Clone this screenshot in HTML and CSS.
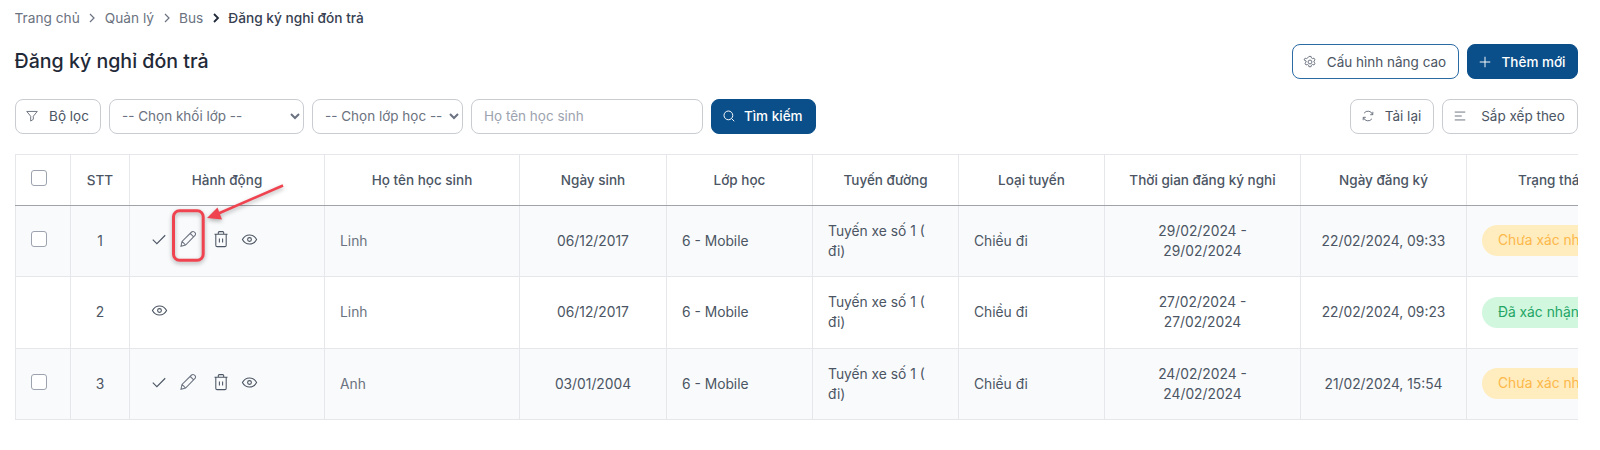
FILE: index.html
```html
<!DOCTYPE html>
<html lang="vi">
<head>
<meta charset="utf-8">
<title>Đăng ký nghỉ đón trả</title>
<link rel="stylesheet" href="styles.css">
</head>
<body>
<svg width="0" height="0" class="defs">
  <symbol id="i-check" viewBox="0 0 18 18"><path d="M2 9.800 6.600 14.200 16 4.800"/></symbol>
  <symbol id="i-pencil" viewBox="0 0 18 18"><path d="M2 16.200 3 11.400 12.600 2a1.900 1.900 0 0 1 2.700 0l.7.700a1.900 1.900 0 0 1 0 2.700L6.600 15 2 16.200ZM3 11.400 6.600 15M11.200 3.400l3.400 3.400"/></symbol>
  <symbol id="i-trash" viewBox="0 0 18 18"><path d="M2.500 4.200h13M6.300 4.200V2.600c0-.6.400-1 1-1h3.400c.6 0 1 .4 1 1v1.600M3.800 4.200v11c0 .8.600 1.400 1.400 1.400h7.600c.8 0 1.400-.6 1.400-1.400v-11M7.400 8.500v4M10.600 8.500v4"/></symbol>
  <symbol id="i-eye" viewBox="0 0 18 18"><path d="M1.500 9C3.200 5.800 5.800 4.200 9 4.200s5.800 1.600 7.500 4.800c-1.700 3.200-4.300 4.800-7.500 4.800S3.200 12.200 1.500 9Z"/><circle cx="9" cy="9" r="2"/></symbol>
</svg>

<main class="page">
  <nav class="crumbs">
    <span>Trang chủ</span>
    <svg class="chev" viewBox="0 0 10 10"><path d="M3 1l4 4-4 4"/></svg>
    <span>Quản lý</span>
    <svg class="chev" viewBox="0 0 10 10"><path d="M3 1l4 4-4 4"/></svg>
    <span>Bus</span>
    <svg class="chev chev-strong" viewBox="0 0 10 10"><path d="M3 1l4 4-4 4"/></svg>
    <span class="crumb-current">Đăng ký nghỉ đón trả</span>
  </nav>

  <header class="title-row">
    <h1 class="title">Đăng ký nghỉ đón trả</h1>
    <div class="actions">
      <button class="btn btn-outline btn-config">
        <svg class="ico ico-gear" viewBox="0 0 16 16"><circle cx="8" cy="8" r="2.200"/><path d="M6.800 1.600h2.400l.4 1.700 1.300.8 1.700-.5 1.200 2-1.300 1.200v1.400l1.300 1.200-1.200 2-1.700-.5-1.300.8-.4 1.700H6.800l-.4-1.700-1.300-.8-1.700.5-1.200-2 1.300-1.200V6.800L1.200 5.600l1.200-2 1.700.5 1.300-.8z" stroke-linejoin="round"/></svg>
        Cấu hình nâng cao
      </button>
      <button class="btn btn-primary btn-add">
        <svg class="ico" viewBox="0 0 16 16"><path d="M8 2v12M2 8h12"/></svg>
        Thêm mới
      </button>
    </div>
  </header>

  <section class="filters">
    <div class="filter-left">
      <button class="btn btn-filter">
        <svg class="ico" viewBox="0 0 16 16"><path d="M2 2.800h12L9.500 8.300v3.500l-3 2V8.300z"/></svg>
        Bộ lọc
      </button>
      <select class="field select-grade"><option>-- Chọn khối lớp --</option></select>
      <select class="field select-class"><option>-- Chọn lớp học --</option></select>
      <input class="field input-name" placeholder="Họ tên học sinh">
      <button class="btn btn-primary btn-search">
        <svg class="ico" viewBox="0 0 16 16"><circle cx="7.300" cy="7.300" r="5"/><path d="M11 11l3 3"/></svg>
        Tìm kiếm
      </button>
    </div>
    <div class="filter-right">
      <button class="btn btn-reload">
        <svg class="ico" viewBox="0 0 16 16"><path d="M13.300 6.500A5.500 5.500 0 0 0 3.500 4.800M2.700 9.500a5.500 5.500 0 0 0 9.800 1.700M13.500 3.200v3.300h-3M2.500 12.800V9.500h3"/></svg>
        Tải lại
      </button>
      <button class="btn btn-sort">
        <svg class="ico" viewBox="0 0 16 16"><path d="M2 3.500h12M2 8h8M2 12.500h12"/></svg>
        Sắp xếp theo
      </button>
    </div>
  </section>

  <div class="table-wrap">
    <table class="grid">
      <colgroup>
        <col class="c-check"><col class="c-stt"><col class="c-act"><col class="c-name"><col class="c-dob"><col class="c-class"><col class="c-route"><col class="c-type"><col class="c-time"><col class="c-reg"><col class="c-status">
      </colgroup>
      <thead>
        <tr>
          <th class="cell-check"><span class="check"></span></th><th>STT</th><th>Hành động</th><th>Họ tên học sinh</th><th>Ngày sinh</th><th>Lớp học</th><th>Tuyến đường</th><th>Loại tuyến</th><th>Thời gian đăng ký nghỉ</th><th>Ngày đăng ký</th><th>Trạng thái</th>
        </tr>
      </thead>
      <tbody>
        <tr class="odd">
          <td class="cell-check"><span class="check"></span></td>
          <td class="center dark">1</td>
          <td><div class="row-icons"><svg class="ri ri-check"><use href="#i-check"/></svg><svg class="ri ri-pencil"><use href="#i-pencil"/></svg><svg class="ri ri-trash"><use href="#i-trash"/></svg><svg class="ri ri-eye"><use href="#i-eye"/></svg></div></td>
          <td class="muted">Linh</td>
          <td class="center dark">06/12/2017</td>
          <td class="dark">6 - Mobile</td>
          <td class="dark">Tuyến xe số 1 ( đi)</td>
          <td class="dark">Chiều đi</td>
          <td class="center dark">29/02/2024 - 29/02/2024</td>
          <td class="center dark">22/02/2024, 09:33</td>
          <td><span class="pill pill-wait">Chưa xác nhận</span></td>
        </tr>
        <tr>
          <td></td>
          <td class="center dark">2</td>
          <td><div class="row-icons"><svg class="ri ri-eye"><use href="#i-eye"/></svg></div></td>
          <td class="muted">Linh</td>
          <td class="center dark">06/12/2017</td>
          <td class="dark">6 - Mobile</td>
          <td class="dark">Tuyến xe số 1 ( đi)</td>
          <td class="dark">Chiều đi</td>
          <td class="center dark">27/02/2024 - 27/02/2024</td>
          <td class="center dark">22/02/2024, 09:23</td>
          <td><span class="pill pill-ok">Đã xác nhận</span></td>
        </tr>
        <tr class="odd">
          <td class="cell-check"><span class="check"></span></td>
          <td class="center dark">3</td>
          <td><div class="row-icons"><svg class="ri ri-check"><use href="#i-check"/></svg><svg class="ri ri-pencil"><use href="#i-pencil"/></svg><svg class="ri ri-trash"><use href="#i-trash"/></svg><svg class="ri ri-eye"><use href="#i-eye"/></svg></div></td>
          <td class="muted">Anh</td>
          <td class="center dark">03/01/2004</td>
          <td class="dark">6 - Mobile</td>
          <td class="dark">Tuyến xe số 1 ( đi)</td>
          <td class="dark">Chiều đi</td>
          <td class="center dark">24/02/2024 - 24/02/2024</td>
          <td class="center dark">21/02/2024, 15:54</td>
          <td><span class="pill pill-wait">Chưa xác nhận</span></td>
        </tr>
      </tbody>
    </table>
  </div>
</main>

<svg class="note" viewBox="0 0 1600 450">
  <rect class="note-box" x="173.500" y="210.800" width="29.700" height="49.500" rx="6"/>
  <path class="note-line" d="M283 185.500 215 215"/>
  <path class="note-head" d="M207 218 217.500 207.500 222 219.500Z"/>
</svg>
</body>
</html>
```
FILE: styles.css
```css
* { box-sizing: border-box; }
html, body { margin: 0; padding: 0; }
body {
  position: relative;
  width: 1600px;
  height: 450px;
  overflow: hidden;
  background: #fff;
  font-family: Inter, "Noto Sans", sans-serif;
  font-size: 13.500px;
  color: #4b5563;
}
.defs { position: absolute; }
.page { padding: 8px 22px 0 15px; }

.crumbs { display: flex; align-items: center; gap: 7.500px; height: 20px; margin-left: -.5px; color: #6b7280; font-size: 13.700px; }
.chev { width: 10px; height: 10px; fill: none; stroke: #6b7280; stroke-width: 1.200; }
.chev-strong { stroke: #1f2937; stroke-width: 1.800; }
.crumb-current { color: #374151; font-weight: 500; }

.title-row { display: flex; justify-content: space-between; align-items: center; height: 35px; margin-top: 16px; }
.title { margin: 0 0 0 -.5px; font-size: 19.600px; font-weight: 500; color: #1f2937; line-height: 1; }
.actions { display: flex; gap: 8px; }

.btn {
  display: inline-flex; align-items: center; justify-content: center; gap: 10px;
  height: 35px; padding: 0 2px 0 0; border: 1px solid #c9ccd1; border-radius: 8px;
  background: #fff; color: #4b5563; font: 400 13.500px Inter, sans-serif;
}
.ico { width: 14px; height: 14px; fill: none; stroke: currentColor; stroke-width: 1.100; flex: none; }
.btn-outline { border-color: #2b6aa3; }
.btn-outline .ico { color: #6b7280; }
.btn-primary { background: #0b4f8a; border-color: #0b4f8a; color: #fff; font-weight: 500; }
.btn-config { width: 167px; }
.btn-add { width: 111px; }

.filters { display: flex; justify-content: space-between; margin-top: 19.500px; }
.filter-left, .filter-right { display: flex; gap: 8px; }
.btn-filter { width: 86px; }
.btn-search { width: 105.500px; gap: 8px; }
.btn-reload { width: 84px; }
.btn-sort { width: 136px; gap: 14px; }
.btn-filter .ico, .btn-reload .ico, .btn-sort .ico { color: #6b7280; }

.field {
  height: 35px; border: 1px solid #c9ccd1; border-radius: 8px; background: #fff;
  color: #6b7280; font: 400 13.500px Inter, sans-serif; padding: 0 12px; outline: none;
}
select.field { padding: 0 0 0 8px; }
.select-grade { width: 195px; }
.select-class { width: 151px; }
.input-name { width: 231.500px; }
.input-name::placeholder { color: #9ca3af; opacity: 1; }

.table-wrap { margin-top: 20px; width: 1563px; overflow: hidden; }
.grid { border-collapse: collapse; table-layout: fixed; width: 1619px; }
.c-check { width: 55px; } .c-stt { width: 59px; } .c-act { width: 195px; } .c-name { width: 195px; }
.c-dob { width: 147px; } .c-class { width: 146px; } .c-route { width: 146px; } .c-type { width: 146px; }
.c-time { width: 196px; } .c-reg { width: 166px; } .c-status { width: 168px; }

th, td { border: 1px solid #e5e7eb; padding: 0 15px; line-height: 20px; }
th { height: 51px; font-weight: 500; color: #4b5563; text-align: center; border-bottom: 1px solid #a0a3a8; }
td { height: 71.500px; font-size: 13.800px; }
.odd td { background: #f9fafb; }
.center { text-align: center; }
.dark { color: #4b5563; }
.muted { color: #6b7280; }

.check { display: block; width: 16px; height: 16px; margin-bottom: 3px; border: 1px solid #9ca3af; border-radius: 3px; background: #fff; }

.row-icons { display: flex; align-items: center; height: 20px; margin-bottom: 3px; }
.ri { fill: none; stroke: #4b5563; stroke-width: 1.050; flex: none; }
.ri-check { width: 16px; height: 16px; margin-left: 6px; stroke-width: 1.250; }
.ri-pencil { width: 18px; height: 18px; margin-left: 12px; stroke: #6b7280; }
.ri-trash { width: 18px; height: 18px; margin-left: 15px; }
.ri-eye { width: 17px; height: 17px; margin-left: 11px; stroke: #4b5563; stroke-width: 1.150; }
.row-icons > .ri-eye:first-child { margin-left: 6px; }

.pill { display: inline-block; height: 31px; line-height: 31px; padding: 0 16px; border-radius: 16px; white-space: nowrap; }
.pill-wait { background: #ffecbf; color: #fdb84a; }
.pill-ok { background: #d1f7de; color: #22a565; }

.note { position: absolute; left: 0; top: 0; width: 1600px; height: 450px; pointer-events: none; filter: drop-shadow(0 2px 2px rgba(0,0,0,.3)); }
.note-box { fill: none; stroke: #ef4450; stroke-width: 3; }
.note-line { fill: none; stroke: #ef4450; stroke-width: 2.500; }
.note-head { fill: #ef4450; }
```
